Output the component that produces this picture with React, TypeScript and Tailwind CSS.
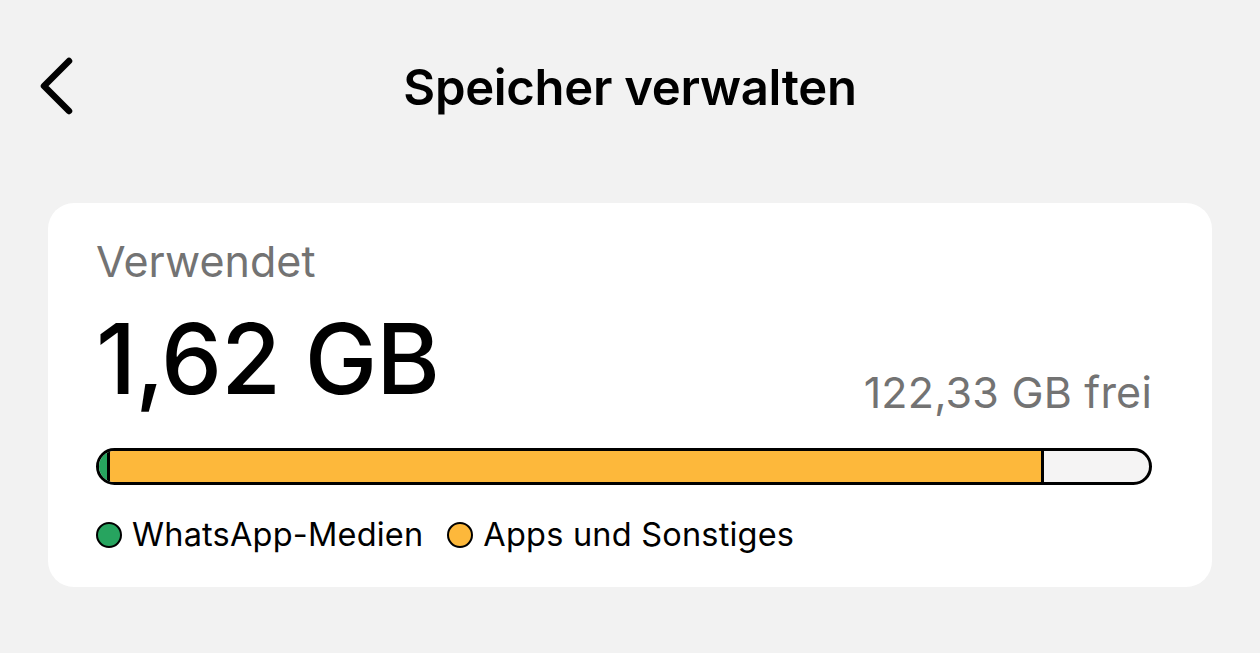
const App = () => {
    return (
        <div className="w-[1260px] h-[653px] bg-[#f2f2f2] overflow-hidden" style={{ fontFamily: "Inter, 'Noto Sans', sans-serif" }}>
            <header className="relative flex items-center justify-center h-[176px]">
                <button className="absolute left-[36px] top-[55px] text-black">
                    <svg width="44" height="62" viewBox="0 0 44 62" fill="none">
                        <path d="M33 6 L8 31 L33 56" stroke="currentColor" strokeWidth="6.5" strokeLinecap="round" strokeLinejoin="round" />
                    </svg>
                </button>
                <h1 className="text-[49px] font-semibold text-black tracking-[-0.3px]">Speicher verwalten</h1>
            </header>

            <section className="mx-[48px] bg-white rounded-[26px] pl-[48px] pr-[60px] pt-[37px] h-[384px] mt-[27px]">
                <p className="text-[43px] text-[#737373] leading-none">Verwendet</p>
                <div className="flex items-end justify-between mt-[27px]">
                    <span className="text-[97px] font-medium leading-none text-black tracking-[-1px]">1,62 GB</span>
                    <span className="text-[43px] leading-none text-[#737373] mb-[-7px] tracking-[0.2px]">122,33 GB frei</span>
                </div>

                <div className="mt-[41px] flex h-[37px] rounded-full border-[3px] border-black overflow-hidden bg-[#f5f4f4]">
                    <div className="w-[11px] bg-[#27a45f] border-r-[3px] border-black" />
                    <div className="w-[934px] bg-[#fdb83b] border-r-[3px] border-black" />
                </div>

                <div className="flex items-center gap-[24px] mt-[34px] text-[32.5px] leading-none text-black tracking-[0.2px]">
                    <div className="flex items-center gap-[10px]">
                        <span className="w-[26px] h-[26px] rounded-full bg-[#27a45f] border-[2.5px] border-black" />
                        <span>WhatsApp-Medien</span>
                    </div>
                    <div className="flex items-center gap-[10px]">
                        <span className="w-[26px] h-[26px] rounded-full bg-[#fdb83b] border-[2.5px] border-black" />
                        <span>Apps und Sonstiges</span>
                    </div>
                </div>
            </section>
        </div>
    );
};

export default App;
